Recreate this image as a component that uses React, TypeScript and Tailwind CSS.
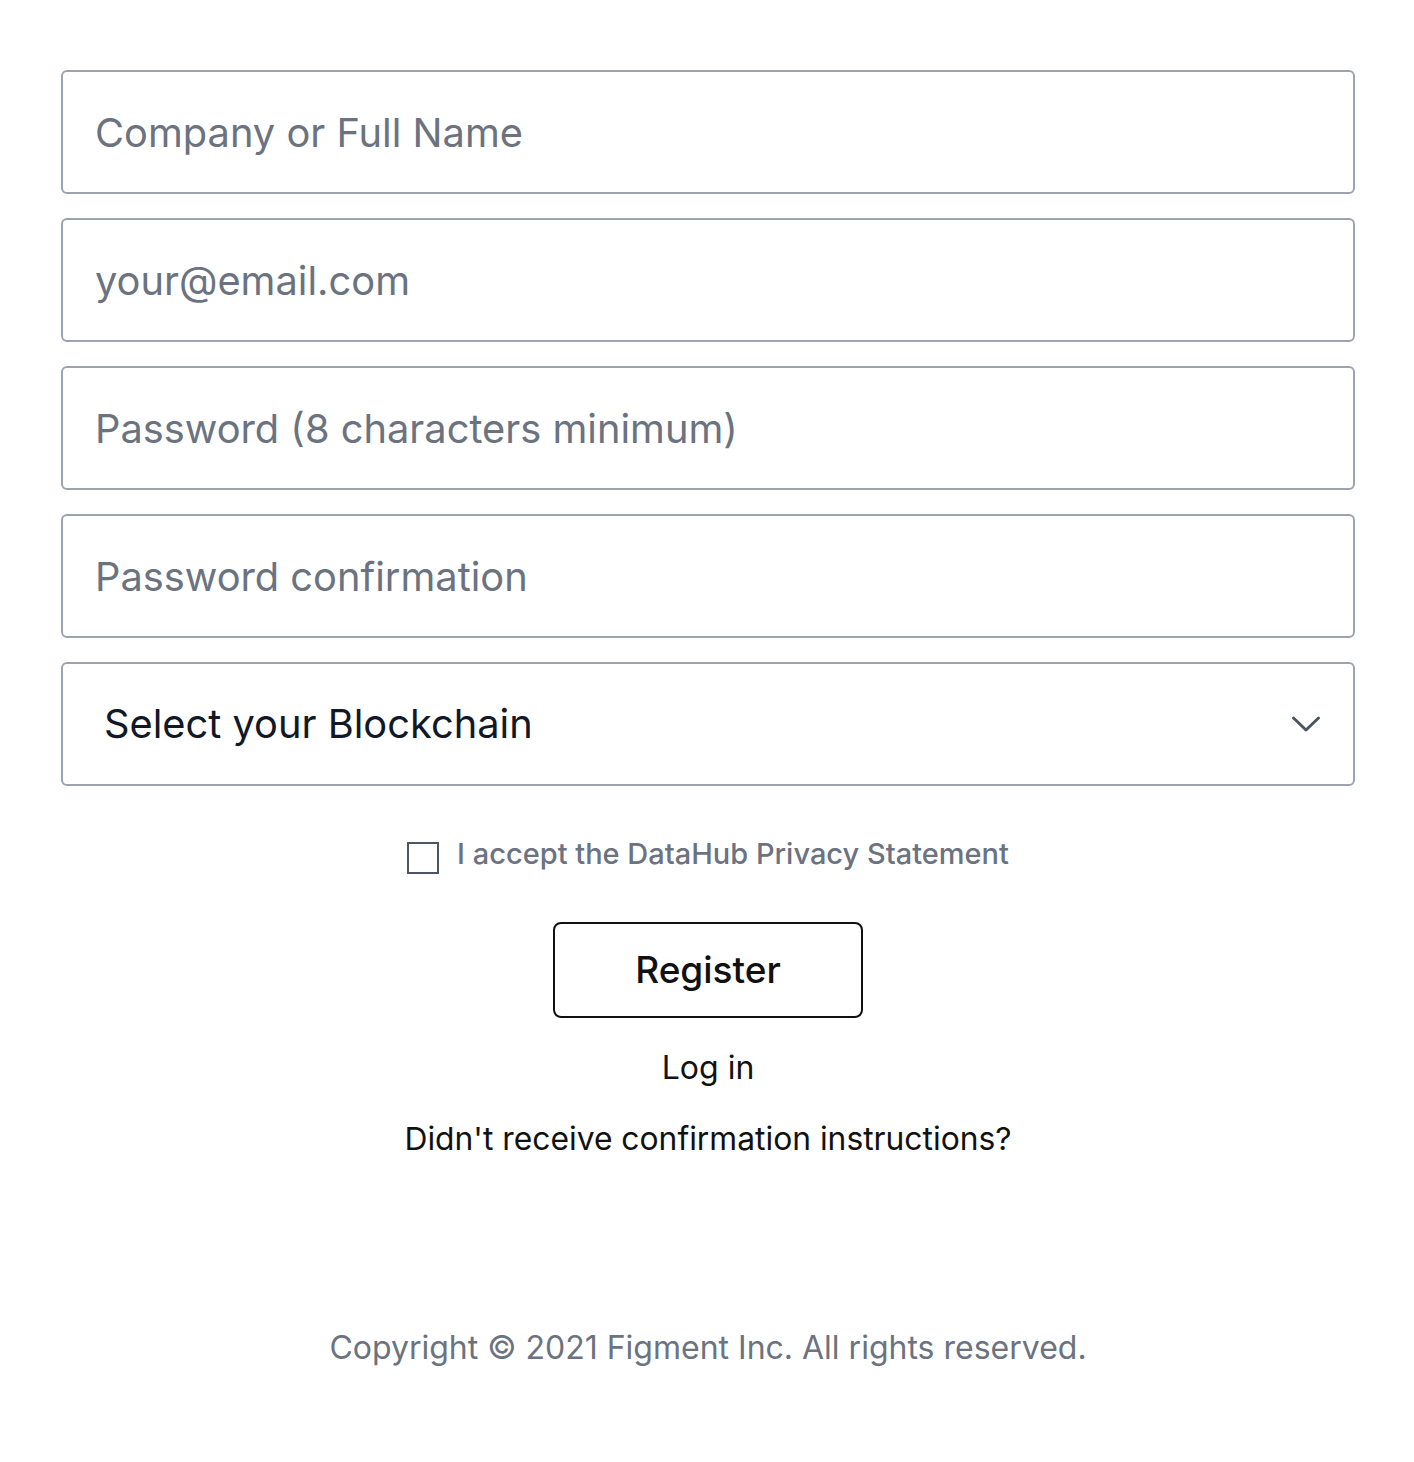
import React from "react";

const fieldCls =
  "block w-full h-[124px] rounded-[6px] border-2 border-[#9ca3af] bg-white px-[32px] text-[39.8px] text-[#111827] placeholder:text-[#6b7280] outline-none";

export default function App() {
  return (
    <div className="min-h-[1462px] w-full bg-white" style={{ fontFamily: "Inter, 'Noto Sans', sans-serif" }}>
      <div className="pl-[61px] pr-[59px] pt-[70px]">
        <div className="flex flex-col gap-[24px]">
          <input className={fieldCls} placeholder="Company or Full Name" />
          <input className={fieldCls} placeholder="your@email.com" />
          <input className={fieldCls} placeholder="Password (8 characters minimum)" type="password" />
          <input className={fieldCls} placeholder="Password confirmation" type="password" />
          <div className="relative flex h-[124px] w-full items-center rounded-[6px] border-2 border-[#9ca3af] bg-white pl-[41px] pr-[32px]">
            <span className="text-[39.8px] text-[#111827]">Select your Blockchain</span>
            <svg className="absolute right-[32px] top-1/2 -translate-y-1/2" width="30" height="18" viewBox="0 0 30 18" fill="none">
              <path d="M2.5 3l12.5 12 12.5-12" stroke="#4b5563" strokeWidth="3" strokeLinecap="round" strokeLinejoin="round" />
            </svg>
          </div>
        </div>
        <div className="mt-[52px] flex h-[40px] items-center justify-center gap-[18px]">
          <span className="block h-[32px] w-[32px] border-2 border-[#4b5563] bg-white" />
          <span className="relative -top-[4px] text-[29px] font-medium leading-[40px] text-[#6b7280]">I accept the DataHub Privacy Statement</span>
        </div>
        <div className="mt-[44px] flex justify-center">
          <button className="h-[96px] w-[310px] rounded-[8px] border-2 border-[#111] bg-white text-[37px] font-medium text-[#111]">
            Register
          </button>
        </div>
        <div className="mt-[26px] flex flex-col items-center gap-[23px] text-[32px] text-[#111]">
          <a className="leading-[48px]">Log in</a>
          <a className="leading-[48px] text-[31.8px]">Didn't receive confirmation instructions?</a>
        </div>
        <div className="mt-[161px] text-center text-[32px] text-[#6b7280]">
          Copyright © 2021 Figment Inc. All rights reserved.
        </div>
      </div>
    </div>
  );
}
